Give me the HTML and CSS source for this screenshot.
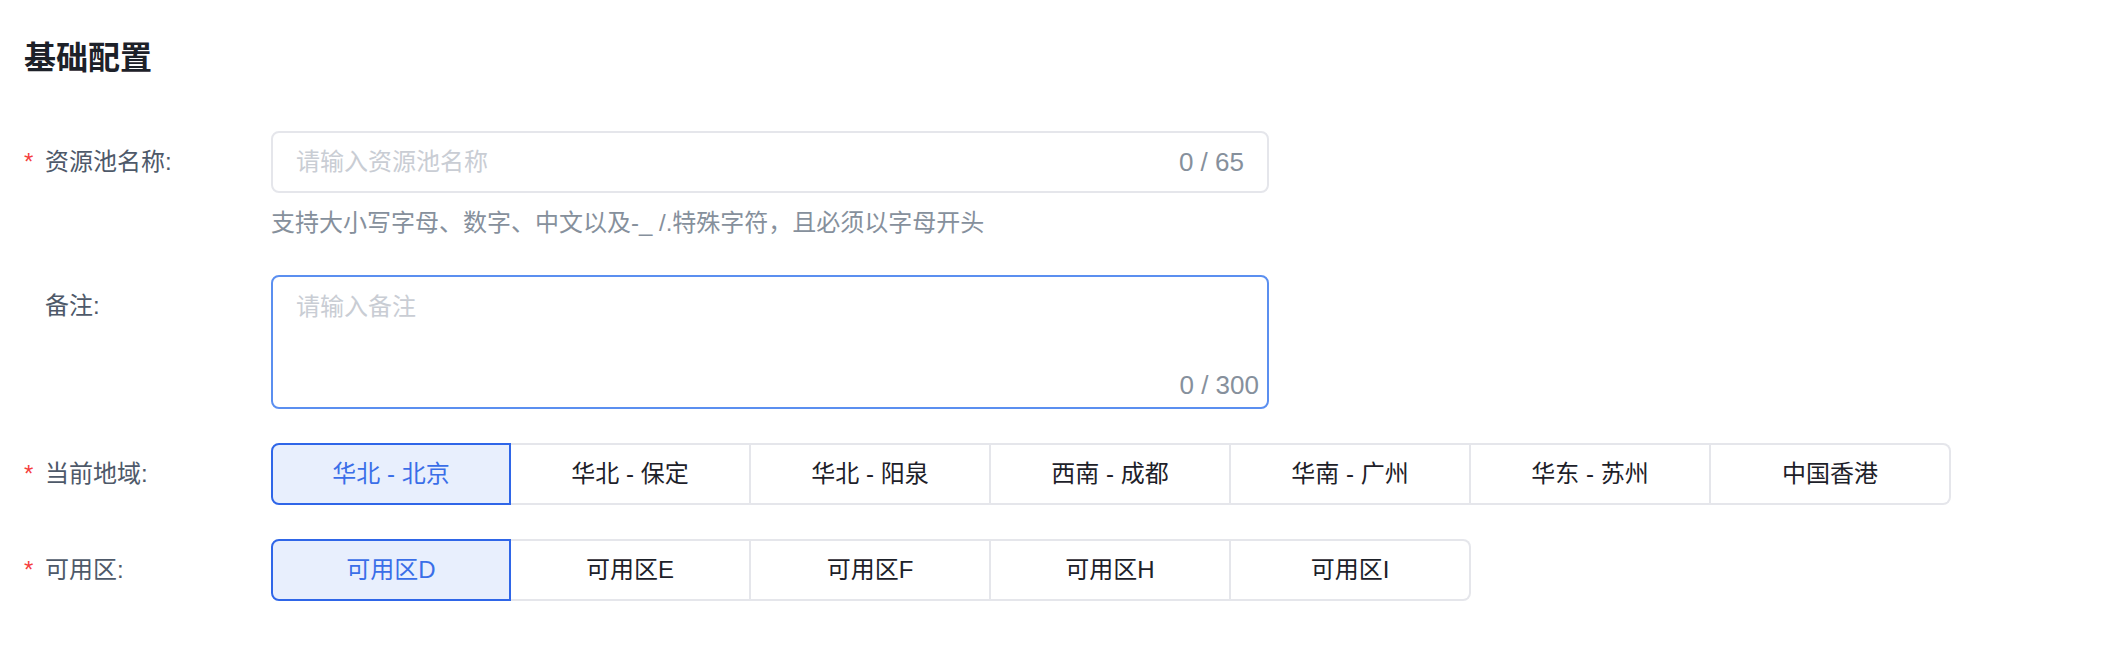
FILE: index.html
```html
<!DOCTYPE html>
<html lang="zh-CN">
<head>
<meta charset="utf-8">
<title>基础配置</title>
<link rel="stylesheet" href="styles.css">
</head>
<body>
<div class="page">
<h1 class="title">基础配置</h1>

<div class="item">
<div class="label"><span class="star">*</span>资源池名称:</div>
<div class="ctrl">
<div class="input"><input type="text" placeholder="请输入资源池名称"><span class="count">0 / 65</span></div>
<div class="hint">支持大小写字母、数字、中文以及-_ /.特殊字符，且必须以字母开头</div>
</div>
</div>

<div class="item">
<div class="label"><span class="star"></span>备注:</div>
<div class="ctrl">
<div class="area"><textarea placeholder="请输入备注"></textarea><span class="count area-count">0 / 300</span></div>
</div>
</div>

<div class="item">
<div class="label"><span class="star">*</span>当前地域:</div>
<div class="ctrl">
<div class="group">
<button class="opt on">华北 - 北京</button>
<button class="opt">华北 - 保定</button>
<button class="opt">华北 - 阳泉</button>
<button class="opt">西南 - 成都</button>
<button class="opt">华南 - 广州</button>
<button class="opt">华东 - 苏州</button>
<button class="opt">中国香港</button>
</div>
</div>
</div>

<div class="item">
<div class="label"><span class="star">*</span>可用区:</div>
<div class="ctrl">
<div class="group">
<button class="opt on">可用区D</button>
<button class="opt">可用区E</button>
<button class="opt">可用区F</button>
<button class="opt">可用区H</button>
<button class="opt">可用区I</button>
</div>
</div>
</div>
</div>
</body>
</html>
```
FILE: styles.css
```css
*{box-sizing:border-box;margin:0;padding:0;}
body{background:#fff;font-family:"Liberation Sans","Noto Sans CJK SC",sans-serif;font-size:24px;color:#1d2129;}
.page{padding:36px 24px 0;}
.title{font-size:32px;line-height:44px;font-weight:700;color:#1d2129;margin-bottom:51px;}
.item{display:flex;margin-bottom:34px;}
.label{flex:none;width:247px;line-height:62px;color:#4e5969;white-space:nowrap;}
.star{display:inline-block;width:21px;color:#f53f3f;}
.ctrl{flex:none;width:998px;}
.input{display:flex;align-items:center;height:62px;border:2px solid #e5e6eb;border-radius:8px;padding:0 23px;}
.input input{flex:1;border:0;outline:none;background:transparent;font:inherit;color:#1d2129;}
input::placeholder,textarea::placeholder{color:#c9cdd4;}
.count{color:#86909c;font-size:26px;line-height:36px;}
.hint{margin-top:12px;line-height:36px;color:#86909c;}
.area{position:relative;}
.area textarea{display:block;width:100%;height:134px;border:2px solid #5b8ff0;border-radius:8px;padding:12px 23px;font:inherit;line-height:36px;resize:none;outline:none;color:#1d2129;}
.area-count{position:absolute;right:10px;bottom:6px;}
.group{display:flex;}
.opt{flex:0 0 240px;height:62px;background:#fff;border:2px solid #e5e6eb;border-left:0;font:inherit;line-height:58px;color:#1d2129;cursor:pointer;}
.opt:first-child{border-left:2px solid #e5e6eb;border-radius:8px 0 0 8px;}
.opt:last-child{border-radius:0 8px 8px 0;}
.opt.on{background:#e8effd;color:#3a6ee8;border-color:#2f66e8;}
.opt.on:first-child{border-left-color:#2f66e8;}
```
